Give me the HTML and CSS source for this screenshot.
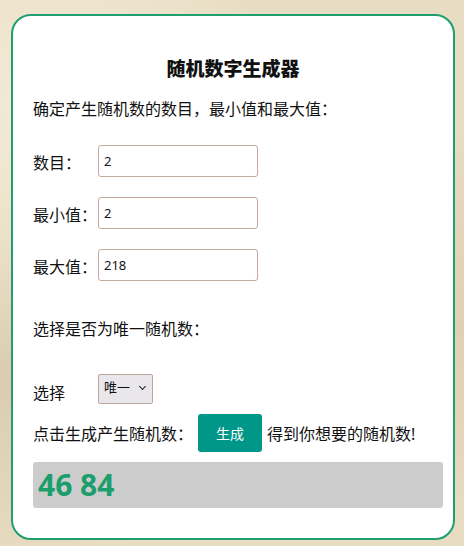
FILE: index.html
```html
<!DOCTYPE html>
<html>

<head>
  <meta charset="utf-8">
  <title>随机数字生成器</title>
  <link rel="stylesheet" href="styles.css">
</head>

<body>
  <div class="card">
    <h2 class="title">随机数字生成器</h2>
    <p class="intro">确定产生随机数的数目，最小值和最大值：</p>

    <div class="row">
      <label for="count">数目：</label>
      <input type="text" id="count" class="field" value="2">
    </div>
    <div class="row">
      <label for="min">最小值：</label>
      <input type="text" id="min" class="field" value="2">
    </div>
    <div class="row">
      <label for="max">最大值：</label>
      <input type="text" id="max" class="field" value="218">
    </div>

    <p class="intro unique">选择是否为唯一随机数：</p>

    <div class="row select-row">
      <label for="unique">选择</label>
      <span class="choice-wrap">
        <select id="unique" class="choice">
          <option>唯一</option>
          <option>可重复</option>
        </select>
      </span>
    </div>

    <div class="action">
      <span>点击生成产生随机数：</span>
      <button type="button" class="gen">生成</button>
      <span>得到你想要的随机数!</span>
    </div>

    <div class="result">46 84</div>
  </div>
</body>

</html>
```

FILE: styles.css
```css
body {
  margin: 0;
  min-height: 546px;
  font-family: "Noto Sans", "Noto Sans CJK SC", sans-serif;
  color: #111;
  background-color: #e8dcc3;
  background-image:
    radial-gradient(ellipse at 10% 20%, rgba(255, 250, 235, 0.5), transparent 40%),
    radial-gradient(ellipse at 90% 60%, rgba(210, 190, 160, 0.45), transparent 45%),
    radial-gradient(ellipse at 0% 70%, rgba(200, 180, 150, 0.4), transparent 35%);
  overflow: hidden;
}

.card {
  box-sizing: border-box;
  width: 444px;
  height: 526px;
  margin: 14px 0 0 11px;
  padding: 41px 10px 0 20px;
  background: #fff;
  border: 2px solid #1f9e6e;
  border-radius: 20px;
}

.title {
  margin: 0;
  padding-right: 10px;
  font-size: 19px;
  font-weight: 900;
  line-height: 24px;
  text-align: center;
}

.intro {
  margin: 16px 0 0;
  font-size: 16px;
  line-height: 24px;
}

.unique {
  margin-top: 36px;
}

.row {
  display: flex;
  align-items: center;
  margin-top: 20px;
  font-size: 16px;
}

.row:first-of-type {
  margin-top: 24px;
}

.row label {
  width: 65px;
  padding-top: 2px;
}

.field {
  box-sizing: border-box;
  width: 160px;
  height: 32px;
  padding: 0 5px;
  font-family: inherit;
  font-size: 13px;
  color: #111;
  border: 1px solid #c3aa9c;
  border-radius: 3px;
}

.select-row {
  margin-top: 33px;
  align-items: flex-end;
}

.choice-wrap {
  position: relative;
  display: block;
  height: 30px;
}

/* 下拉箭头 */
.choice-wrap::after {
  content: "";
  position: absolute;
  left: 42px;
  top: 10px;
  width: 4px;
  height: 4px;
  border-right: 1.5px solid #222;
  border-bottom: 1.5px solid #222;
  transform: rotate(45deg);
  pointer-events: none;
}

.choice {
  box-sizing: border-box;
  width: 55px;
  height: 30px;
  padding: 0 0 4px 5px;
  font-family: inherit;
  font-size: 13px;
  color: #111;
  background: #e9e7ec;
  border: 1px solid #bba69b;
  border-radius: 2px;
  appearance: none;
  -webkit-appearance: none;
}

.action {
  display: flex;
  align-items: center;
  margin-top: 10px;
  font-size: 16px;
}

.gen {
  width: 64px;
  height: 38px;
  margin: 0 5px 0 5px;
  font-family: inherit;
  font-size: 14px;
  color: #fff;
  background: #009688;
  border: none;
  border-radius: 3px;
}

.result {
  box-sizing: border-box;
  height: 46px;
  margin-top: 10px;
  padding: 0 5px;
  font-size: 30px;
  font-weight: bold;
  line-height: 46px;
  color: #1a9e6c;
  background: #cccccc;
  border-radius: 3px;
}
```
